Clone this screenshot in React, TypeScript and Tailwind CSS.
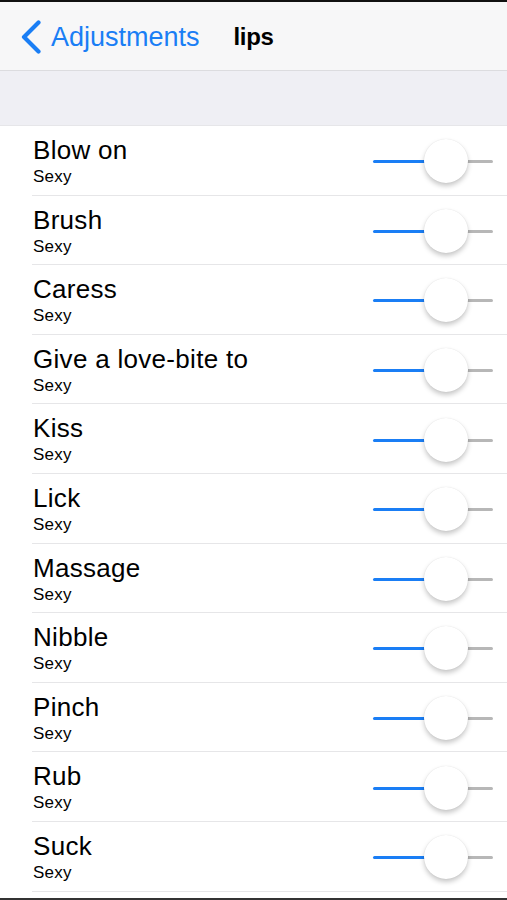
import React from "react";

const items = [
  "Blow on",
  "Brush",
  "Caress",
  "Give a love-bite to",
  "Kiss",
  "Lick",
  "Massage",
  "Nibble",
  "Pinch",
  "Rub",
  "Suck",
];

function Slider() {
  return (
    <div className="relative w-[121px] h-[46px] shrink-0">
      <div className="absolute left-0 top-[23px] h-[3px] w-[54px] rounded-full bg-[#1a7ef5]" />
      <div className="absolute left-[93px] top-[23px] h-[3px] w-[27px] rounded-full bg-[#b7b7b7]" />
      <div className="absolute left-[51px] top-[2px] h-[44px] w-[44px] rounded-full bg-white shadow-[0_3px_5px_rgba(0,0,0,0.22),0_0_1px_rgba(0,0,0,0.12)]" />
    </div>
  );
}

export default function App() {
  return (
    <div
      className="w-[507px] h-[900px] bg-white flex flex-col overflow-hidden"
      style={{ fontFamily: '"Liberation Sans", Arial, sans-serif' }}
    >
      <div className="h-[2px] bg-[#111]" />
      <div className="h-[69px] bg-[#f7f7f8] border-b border-[#dcdcdf] grid grid-cols-[1fr_auto_1fr] items-center">
        <div className="flex items-center pl-[20px] pt-[1px]">
          <svg width="22" height="34" viewBox="0 0 22 34" className="shrink-0">
            <polyline
              points="18.5,2.5 4,17 18.5,31.5"
              fill="none"
              stroke="#1a7ef5"
              strokeWidth="4.2"
              strokeLinecap="round"
              strokeLinejoin="round"
            />
          </svg>
          <span className="ml-[9px] text-[27px] leading-[32px] text-[#1a7ef5] pt-[1px]">
            Adjustments
          </span>
        </div>
        <div className="text-[24px] leading-[32px] font-bold text-black tracking-[-0.3px] pt-[2px]">
          lips
        </div>
        <div />
      </div>
      <div className="h-[55px] bg-[#efeff4] border-b border-[#e6e6e9]" />
      <div className="flex flex-col">
        {items.map((name) => (
          <div key={name} className="h-[69.6px] pl-[32px]">
            <div className="h-full border-b border-[#e6e6e8] flex items-center justify-between pr-[13px]">
              <div className="self-start pt-[11px] pl-[1px] flex flex-col">
                <span className="text-[26px] leading-[26px] tracking-[0.3px] text-black">
                  {name}
                </span>
                <span className="mt-[4px] text-[17px] leading-[20px] tracking-[0.2px] text-black">
                  Sexy
                </span>
              </div>
              <Slider />
            </div>
          </div>
        ))}
      </div>
      <div className="flex-1" />
      <div className="h-[2px] bg-[#333]" />
    </div>
  );
}
